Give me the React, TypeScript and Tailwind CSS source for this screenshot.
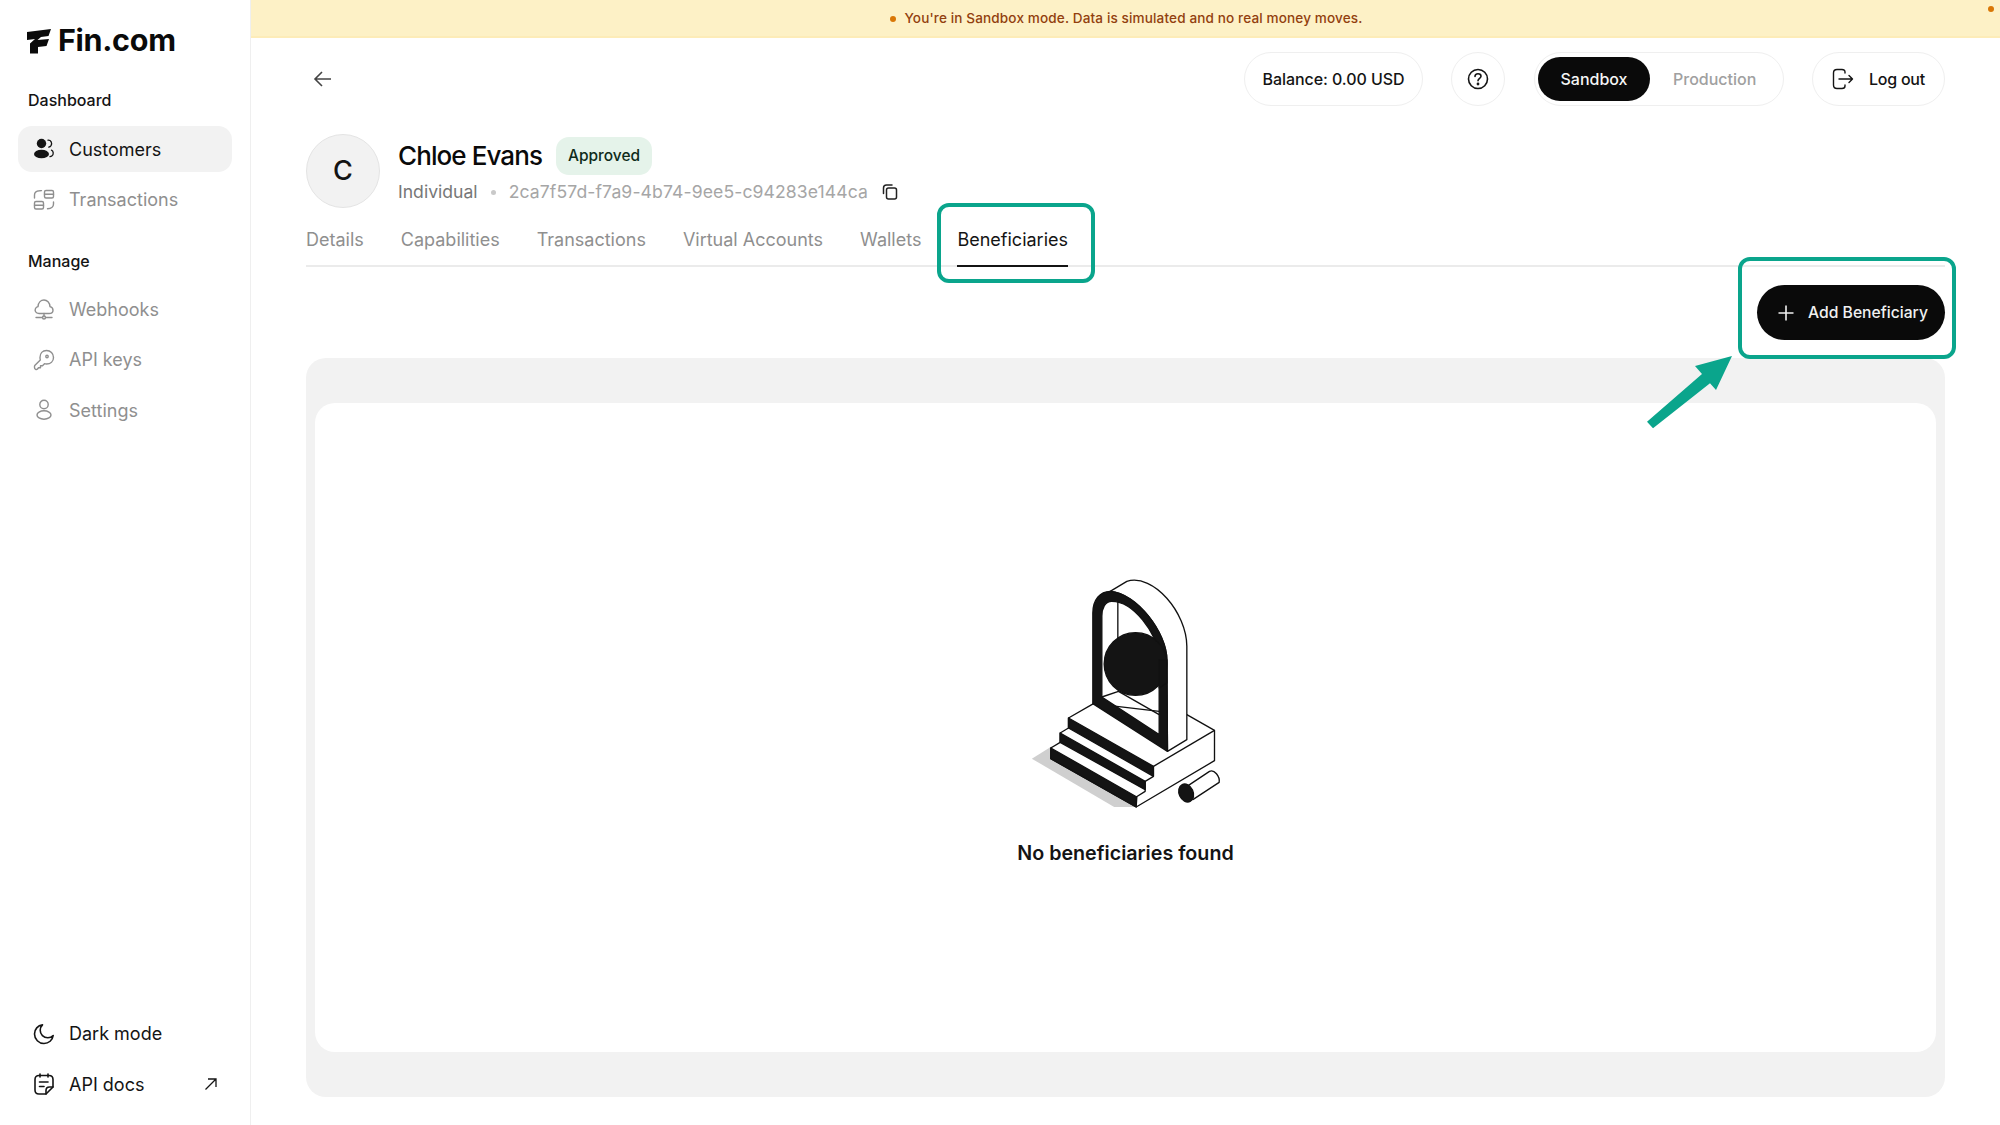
const Illustration = () => (
  <svg width="191" height="232" viewBox="60 52 572 696" fill="none" stroke="#111" strokeWidth="4" strokeLinejoin="round">
    <polygon points="65,597 125,560 375,742 312,742" fill="#cfcfcf" stroke="none" />
    <polygon points="175,475 250,432 530,465 613,512 613,603 378,742 122,597 122,565 150,548 150,520 175,505" fill="#fff" />
    <polygon points="122,565 380,712 378,742 122,597" fill="#141414" />
    <polygon points="150,520 405,665 405,690 150,548" fill="#141414" />
    <polygon points="175,475 430,620 430,650 175,505" fill="#141414" />
    <polyline points="430,620 613,512" />
    <polyline points="378,742 378,712 405,695 405,665 430,650" />
    <path d="M300,95 L350,65 C430,40 530,160 530,260 L530,540 L472,575 L470,300 C470,220 380,100 300,95 Z" fill="#fff" />
    <path d="M248,432 L248,160 C248,120 270,95 300,95 C380,100 470,220 470,300 L472,575 Z M275,412 L447,525 L447,290 C440,220 370,125 305,125 C285,125 275,145 275,170 Z" fill="#141414" fillRule="evenodd" />
    <line x1="323" y1="125" x2="323" y2="235" />
    <polyline points="275,412 325,395 447,465" />
    <circle cx="376" cy="313" r="94" fill="#141414" />
    <path d="M447,300 L470,300 L470,370 L447,385 Z" fill="#141414" />
    <path d="M508,695 L598,635 C612,628 630,650 627,668 L548,720" fill="#fff" />
    <ellipse cx="528" cy="700" rx="21" ry="28" transform="rotate(-25 528 700)" fill="#141414" />
  </svg>
);

const Logo = () => (
  <svg width="24" height="26" viewBox="0 0 24 26" fill="#0a0a0a">
    <path d="M0 4 L24 1 L21.5 8 L14 9 L10.5 12 L22 11 L19.5 18 L11 19 L11 25.5 L3 25.5 L3 15.5 L8 11 L0 12 Z" />
  </svg>
);

const NavItem = ({ icon, label, active = false, muted = true, right }: { icon: React.ReactNode; label: string; active?: boolean; muted?: boolean; right?: React.ReactNode }) => (
  <div className={`flex h-[46px] items-center gap-[13px] rounded-[14px] px-[14px] text-[18px] ${active ? "bg-[#f2f2f2] text-[#141414]" : muted ? "text-[#8f8f8f]" : "text-[#141414]"}`}>
    <span className="flex h-6 w-6 shrink-0 items-center justify-center">{icon}</span>
    <span className="flex-1">{label}</span>
    {right}
  </div>
);

const s = { fill: "none", stroke: "currentColor", strokeWidth: 1.4, strokeLinecap: "round" as const, strokeLinejoin: "round" as const };

const CustomersIcon = () => (
  <svg width="24" height="24" viewBox="0 0 24 24" fill="#141414">
    <circle cx="9.5" cy="6.5" r="4.7" />
    <ellipse cx="9.5" cy="17" rx="7.5" ry="4.3" />
    <path d="M16 3.2 C19 3 20.5 6 19 8.6 C18.4 9.5 17.5 10 16.8 10.2 M19.5 13.2 C21.5 14.2 22 17.5 19.8 19 C19.2 19.4 18.5 19.6 18 19.7" fill="none" stroke="#141414" strokeWidth="1.3" strokeLinecap="round" />
  </svg>
);
const TransactionsIcon = () => (
  <svg width="24" height="24" viewBox="0 0 24 24" {...s}>
    <rect x="12.5" y="2.5" width="9" height="7.5" rx="1.5" />
    <line x1="12.5" y1="6.2" x2="21.5" y2="6.2" />
    <rect x="2.5" y="13.5" width="9" height="7.5" rx="1.5" />
    <line x1="2.5" y1="17.2" x2="11.5" y2="17.2" />
    <path d="M2.5 10 V7 C2.5 4.5 4.5 3 7.5 2.8 L9.5 2.6" />
    <path d="M21.5 14 V16 C21.5 18.5 19.5 20.5 15.5 20.8" />
  </svg>
);
const WebhookIcon = () => (
  <svg width="24" height="24" viewBox="0 0 24 24" {...s}>
    <path d="M7 16.5 C3.5 16.5 2.5 13.5 3.5 11.5 C4.2 10.2 5.3 9.8 6 9.6 C6.3 5.5 9 3 12 3 C15 3 17.8 5.5 18 9.6 C19.5 10 21 11.2 21 13.2 C21 15.2 19.2 16.5 17 16.5 Z" />
    <line x1="12" y1="16.5" x2="12" y2="19" />
    <circle cx="12" cy="20.5" r="1.5" />
    <line x1="4" y1="20.5" x2="10.5" y2="20.5" />
    <line x1="13.5" y1="20.5" x2="20" y2="20.5" />
  </svg>
);
const KeyIcon = () => (
  <svg width="24" height="24" viewBox="0 0 24 24" {...s}>
    <path d="M14.5 2.5 C18.5 2.5 21.5 5.5 21.5 9.5 C21.5 13.5 18.5 16 14.5 16 C13.8 16 13.1 15.9 12.5 15.7 L10.5 17.7 H8.5 V19.7 H6.5 L5.5 21 C4.5 22 2.5 21.5 2.5 19.5 V18.5 C2.5 18 2.7 17.6 3 17.3 L8.3 12 C8.1 11.2 8 10.4 8 9.5 C8 5.5 10.5 2.5 14.5 2.5 Z" />
    <circle cx="15" cy="8.5" r="1.2" />
  </svg>
);
const PersonIcon = () => (
  <svg width="24" height="24" viewBox="0 0 24 24" {...s}>
    <circle cx="12" cy="6.5" r="4.2" />
    <ellipse cx="12" cy="17" rx="7" ry="4.2" />
  </svg>
);
const MoonIcon = () => (
  <svg width="24" height="24" viewBox="0 0 24 24" {...s} strokeWidth={1.6}>
    <path d="M10.5 2.8 C5.8 3.4 2.5 7.3 2.5 12 C2.5 17.2 6.8 21.5 12 21.5 C16.7 21.5 20.6 18.2 21.2 13.5 C19.8 15 17.8 15.8 15.8 15.8 C11.6 15.8 8.2 12.4 8.2 8.2 C8.2 6.2 9 4.2 10.5 2.8 Z" />
  </svg>
);
const DocsIcon = () => (
  <svg width="24" height="24" viewBox="0 0 24 24" {...s} strokeWidth={1.6}>
    <path d="M14 22 H7 C4.2 22 3 20.5 3 18 V7.5 C3 5 4.5 3.5 7 3.5 H17 C19.5 3.5 21 5 21 7.5 V15 Z" />
    <path d="M14 22 V18.5 C14 16.5 15.2 15 17.5 15 H21" />
    <line x1="8" y1="2" x2="8" y2="5" />
    <line x1="16" y1="2" x2="16" y2="5" />
    <line x1="7.5" y1="10" x2="16" y2="10" />
    <line x1="7.5" y1="14.5" x2="12" y2="14.5" />
  </svg>
);

const tabs = ["Details", "Capabilities", "Transactions", "Virtual Accounts", "Wallets"];

export default function App() {
  return (
    <div className="relative flex h-[1125px] w-[2000px] overflow-hidden bg-white text-[#141414] antialiased [font-family:Inter,'Liberation_Sans',sans-serif]">
      <aside className="flex w-[251px] shrink-0 flex-col border-r border-[#efefef] px-[18px] pb-[18px] pt-[27px]">
        <div className="flex h-[27px] items-center gap-[7px] pl-[9px]">
          <Logo />
          <span className="text-[30.5px] font-bold leading-none tracking-[-0.01em] text-[#0a0a0a]">Fin.com</span>
        </div>
        <div className="mt-[34px] pl-[10px] text-[16px] font-medium leading-6">Dashboard</div>
        <nav className="mt-[14px] flex flex-col gap-[4.5px]">
          <NavItem active icon={<CustomersIcon />} label="Customers" />
          <NavItem icon={<TransactionsIcon />} label="Transactions" />
        </nav>
        <div className="mt-[26px] pl-[10px] text-[16px] font-medium leading-6">Manage</div>
        <nav className="mt-[13.5px] flex flex-col gap-[4.5px]">
          <NavItem icon={<WebhookIcon />} label="Webhooks" />
          <NavItem icon={<KeyIcon />} label="API keys" />
          <NavItem icon={<PersonIcon />} label="Settings" />
        </nav>
        <div className="mt-auto flex flex-col gap-[4.5px]">
          <NavItem muted={false} icon={<MoonIcon />} label="Dark mode" />
          <NavItem
            muted={false}
            icon={<DocsIcon />}
            label="API docs"
            right={
              <svg width="14" height="14" viewBox="0 0 14 14" fill="none" stroke="#141414" strokeWidth="1.3">
                <path d="M1.5 12.5 L12 2 M4 2 H12 V10" />
              </svg>
            }
          />
        </div>
      </aside>

      <main className="flex min-w-0 flex-1 flex-col">
        <div className="relative flex h-[38px] shrink-0 items-center justify-center gap-[8px] border-b-2 border-[#fdecb8] bg-[#fdf1c6] pl-[2px] pt-[1px] text-[13.56px] font-medium tracking-[0.01em] text-[#92400e]">
          <span className="h-[6px] w-[6px] rounded-full bg-[#d97706]" />
          <span>You&apos;re in Sandbox mode. Data is simulated and no real money moves.</span>
          <span className="absolute right-[6px] top-[6px] h-[6px] w-[6px] rounded-full bg-[#d97706]" />
        </div>

        <div className="flex flex-1 flex-col px-[55px] pb-[28px]">
          <header className="mt-[14px] flex h-[54px] items-center justify-between">
            <svg width="20" height="20" viewBox="0 0 20 20" fill="none" stroke="#444" strokeWidth="1.6" className="ml-[7px]">
              <path d="M18 10 H2.5 M9 3 L2 10 L9 17" />
            </svg>
            <div className="flex items-center">
              <div className="flex h-[54px] w-[179px] items-center justify-center rounded-full border border-[#efefef] text-[16px] font-medium tracking-[-0.004em]">Balance: 0.00 USD</div>
              <div className="ml-[28px] flex h-[54px] w-[54px] items-center justify-center rounded-full border border-[#efefef]">
                <svg width="24" height="24" viewBox="0 0 24 24" fill="none" stroke="#141414" strokeWidth="1.6" strokeLinecap="round">
                  <circle cx="12" cy="12" r="9.5" />
                  <path d="M9 9.5 C9 7.5 10.5 6.8 12 6.8 C13.7 6.8 15 7.8 15 9.3 C15 11.3 12 11.5 12 13.8" />
                  <circle cx="12" cy="17" r="0.6" fill="#141414" />
                </svg>
              </div>
              <div className="ml-[29px] flex h-[54px] w-[250px] items-center rounded-full border border-[#efefef] pl-[3px] text-[16px] font-medium">
                <div className="flex h-[44px] w-[112px] items-center justify-center rounded-full bg-[#0a0a0a] text-[#f5f5f5]">Sandbox</div>
                <div className="ml-[23px] text-[#a0a0a0]">Production</div>
              </div>
              <div className="ml-[28px] flex h-[54px] w-[133px] items-center gap-[14px] rounded-full border border-[#efefef] pl-[18px] text-[16px] font-medium tracking-[-0.015em]">
                <svg width="24" height="24" viewBox="0 0 24 24" fill="none" stroke="#141414" strokeWidth="1.4" strokeLinecap="round" strokeLinejoin="round">
                  <path d="M14 6 V5 C14 3.2 12.8 2.5 11 2.5 H6 C4 2.5 2.5 4 2.5 6 V18 C2.5 20 4 21.5 6 21.5 H11 C12.8 21.5 14 20.5 14 19 V18" />
                  <path d="M8 12 H21.5 M18 8.5 L21.5 12 L18 15.5" />
                </svg>
                <span>Log out</span>
              </div>
            </div>
          </header>

          <section className="mt-[28px] flex h-[74px] items-center">
            <div className="flex h-[74px] w-[74px] items-center justify-center rounded-full border border-[#e4e4e4] bg-[#f2f2f2] text-[27px] font-medium">C</div>
            <div className="ml-[18px] flex flex-col">
              <div className="flex items-center">
                <h1 className="text-[26px] font-medium leading-[38px] tracking-[-0.035em] text-[#0a0a0a]">Chloe Evans</h1>
                <span className="ml-[14px] flex h-[38px] w-[96px] items-center justify-center rounded-[13px] bg-[#e5f3ea] pb-[1px] text-[15.5px] font-medium text-[#0f2b1a]">Approved</span>
              </div>
              <div className="mt-[4px] flex items-center text-[17.6px] leading-[26px]">
                <span className="text-[#777]">Individual</span>
                <span className="mx-[13px] h-[5px] w-[5px] rounded-full bg-[#c9c9c9]" />
                <span className="tracking-[0.006em] text-[#a6a6a6]">2ca7f57d-f7a9-4b74-9ee5-c94283e144ca</span>
                <svg width="18" height="18" viewBox="0 0 18 18" fill="none" stroke="#222" strokeWidth="1.5" strokeLinecap="round" className="ml-[13px]">
                  <rect x="5.5" y="5" width="10" height="11" rx="2" />
                  <path d="M2.5 10.5 V5 C2.5 3 3.5 2 5.5 2 H11" />
                </svg>
              </div>
            </div>
          </section>

          <nav className="relative mt-[20px] flex border-b-2 border-[#ebebeb] text-[18px] leading-6 text-[#8f8f8f]">
            {tabs.map((t, i) => (
              <div key={t} className={`h-[37px] ${i === 0 ? "" : "ml-[37px]"}`}>{t}</div>
            ))}
            <div className="relative ml-[36px] h-[37px] text-[#141414]">
              Beneficiaries
              <span className="absolute bottom-[-2px] left-0 right-0 h-[2px] bg-[#141414]" />
            </div>
          </nav>

          <div className="mt-[18px] flex justify-end">
            <button className="flex h-[55px] w-[188px] items-center gap-[13px] rounded-full bg-[#0a0a0a] pl-[20px] text-[15.7px] font-medium text-[#f0f0f0]">
              <svg width="18" height="18" viewBox="0 0 18 18" stroke="currentColor" strokeWidth="1.6">
                <path d="M9 1.5 V16.5 M1.5 9 H16.5" />
              </svg>
              Add Beneficiary
            </button>
          </div>

          <div className="mt-[18px] flex h-[739px] flex-col rounded-[20px] bg-[#f2f2f2] px-[9px] py-[45px]">
            <div className="flex flex-1 flex-col items-center justify-center rounded-[20px] bg-white pb-[12px]">
              <Illustration />
              <div className="mt-[30px] text-[19.7px] font-semibold leading-7 text-[#141414]">No beneficiaries found</div>
            </div>
          </div>
        </div>
      </main>

      {/* Annotation overlay */}
      <div className="pointer-events-none absolute left-[937px] top-[203px] h-[80px] w-[158px] rounded-[12px] border-[4px] border-[#0aa58c]" />
      <div className="pointer-events-none absolute left-[1738px] top-[257px] h-[102px] w-[218px] rounded-[12px] border-[4px] border-[#0aa58c]" />
      <svg className="pointer-events-none absolute left-[1640px] top-[350px]" width="100" height="85" viewBox="1640 350 100 85" fill="#0aa58c">
        <polygon points="1732,356 1695,366 1702,374 1647,421.7 1653,428.3 1710,383.3 1716,390" />
      </svg>
    </div>
  );
}
